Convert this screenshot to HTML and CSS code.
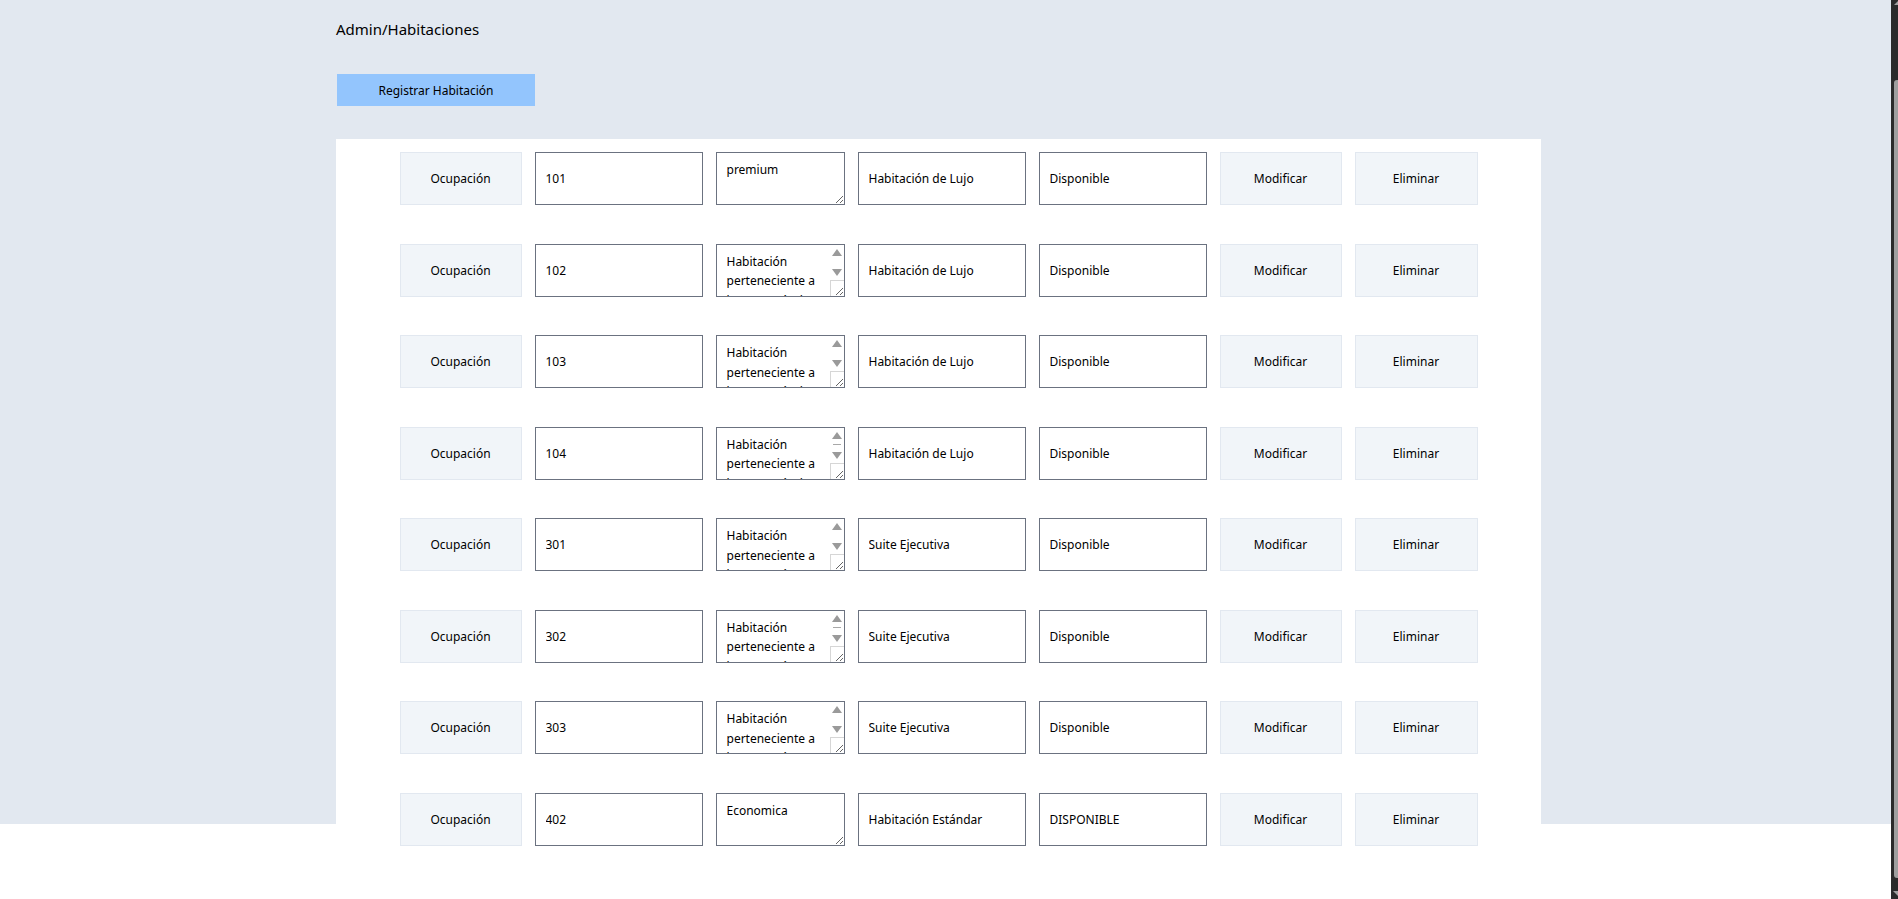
FILE: index.html
```html
<!DOCTYPE html>
<html lang="es">
<head>
<meta charset="utf-8">
<title>Admin/Habitaciones</title>
<link rel="stylesheet" href="styles.css">
</head>
<body>
<div class="page">
  <h1 class="title">Admin/Habitaciones</h1>
  <button class="btn-register" type="button">Registrar Habitación</button>
  <section class="panel">
    <form class="row">
      <button class="cell-btn" type="button">Ocupación</button>
      <input class="field field-num" type="text" value="101">
      <div class="desc-wrap"><textarea class="field field-desc">premium</textarea></div>
      <input class="field field-type" type="text" value="Habitación de Lujo">
      <input class="field field-state" type="text" value="Disponible">
      <button class="cell-btn" type="button">Modificar</button>
      <button class="cell-btn cell-btn-last" type="button">Eliminar</button>
    </form>
    <form class="row">
      <button class="cell-btn" type="button">Ocupación</button>
      <input class="field field-num" type="text" value="102">
      <div class="desc-wrap"><textarea class="field field-desc has-scroll">Habitación perteneciente a la categoría de lujo, con vista al mar y jacuzzi privado.</textarea><span class="sb-up"></span><span class="sb-down"></span><span class="sb-corner"></span></div>
      <input class="field field-type" type="text" value="Habitación de Lujo">
      <input class="field field-state" type="text" value="Disponible">
      <button class="cell-btn" type="button">Modificar</button>
      <button class="cell-btn cell-btn-last" type="button">Eliminar</button>
    </form>
    <form class="row">
      <button class="cell-btn" type="button">Ocupación</button>
      <input class="field field-num" type="text" value="103">
      <div class="desc-wrap"><textarea class="field field-desc has-scroll">Habitación perteneciente a la categoría de lujo, con vista al mar y jacuzzi privado.</textarea><span class="sb-up"></span><span class="sb-down"></span><span class="sb-corner"></span></div>
      <input class="field field-type" type="text" value="Habitación de Lujo">
      <input class="field field-state" type="text" value="Disponible">
      <button class="cell-btn" type="button">Modificar</button>
      <button class="cell-btn cell-btn-last" type="button">Eliminar</button>
    </form>
    <form class="row">
      <button class="cell-btn" type="button">Ocupación</button>
      <input class="field field-num" type="text" value="104">
      <div class="desc-wrap"><textarea class="field field-desc has-scroll">Habitación perteneciente a la categoría de lujo, con vista al mar, jacuzzi privado, minibar, balcón amplio y servicio a la habitación las veinticuatro horas del día.</textarea><span class="sb-up"></span><span class="sb-thumb"></span><span class="sb-down"></span><span class="sb-corner"></span></div>
      <input class="field field-type" type="text" value="Habitación de Lujo">
      <input class="field field-state" type="text" value="Disponible">
      <button class="cell-btn" type="button">Modificar</button>
      <button class="cell-btn cell-btn-last" type="button">Eliminar</button>
    </form>
    <form class="row">
      <button class="cell-btn" type="button">Ocupación</button>
      <input class="field field-num" type="text" value="301">
      <div class="desc-wrap"><textarea class="field field-desc has-scroll">Habitación perteneciente a la categoría ejecutiva, con escritorio amplio y sala de estar.</textarea><span class="sb-up"></span><span class="sb-down"></span><span class="sb-corner"></span></div>
      <input class="field field-type" type="text" value="Suite Ejecutiva">
      <input class="field field-state" type="text" value="Disponible">
      <button class="cell-btn" type="button">Modificar</button>
      <button class="cell-btn cell-btn-last" type="button">Eliminar</button>
    </form>
    <form class="row">
      <button class="cell-btn" type="button">Ocupación</button>
      <input class="field field-num" type="text" value="302">
      <div class="desc-wrap"><textarea class="field field-desc has-scroll">Habitación perteneciente a la categoría ejecutiva, con escritorio amplio, sala de estar, cafetera y acceso al salón ejecutivo durante toda la estancia.</textarea><span class="sb-up"></span><span class="sb-thumb"></span><span class="sb-down"></span><span class="sb-corner"></span></div>
      <input class="field field-type" type="text" value="Suite Ejecutiva">
      <input class="field field-state" type="text" value="Disponible">
      <button class="cell-btn" type="button">Modificar</button>
      <button class="cell-btn cell-btn-last" type="button">Eliminar</button>
    </form>
    <form class="row">
      <button class="cell-btn" type="button">Ocupación</button>
      <input class="field field-num" type="text" value="303">
      <div class="desc-wrap"><textarea class="field field-desc has-scroll">Habitación perteneciente a la categoría ejecutiva, con escritorio amplio y sala de estar.</textarea><span class="sb-up"></span><span class="sb-down"></span><span class="sb-corner"></span></div>
      <input class="field field-type" type="text" value="Suite Ejecutiva">
      <input class="field field-state" type="text" value="Disponible">
      <button class="cell-btn" type="button">Modificar</button>
      <button class="cell-btn cell-btn-last" type="button">Eliminar</button>
    </form>
    <form class="row">
      <button class="cell-btn" type="button">Ocupación</button>
      <input class="field field-num" type="text" value="402">
      <div class="desc-wrap"><textarea class="field field-desc">Economica</textarea></div>
      <input class="field field-type" type="text" value="Habitación Estándar">
      <input class="field field-state" type="text" value="DISPONIBLE">
      <button class="cell-btn" type="button">Modificar</button>
      <button class="cell-btn cell-btn-last" type="button">Eliminar</button>
    </form>
  </section>
</div>
<div class="win-scroll"><div class="win-scroll-up"></div><div class="win-scroll-thumb"></div><div class="win-scroll-down"></div></div>
</body>
</html>
```
FILE: styles.css
```css
html {
  overflow: hidden;
  height: 899px;
}
body {
  margin: 0;
  padding: 0;
  height: 899px;
  overflow: hidden;
  background: #ffffff;
  font-family: "Noto Sans", "Open Sans", sans-serif;
  color: #000000;
}
.page {
  box-sizing: border-box;
  width: 1891px;
  height: 824px;
  background: #e2e8f0;
  padding: 19px 0 0 336px;
}
.title {
  margin: 0;
  font-size: 15px;
  font-weight: 400;
  line-height: 20px;
  letter-spacing: 0;
}
.btn-register {
  display: block;
  margin: 35px 0 0 1px;
  width: 198px;
  height: 32px;
  border: 0;
  padding: 0;
  background: #93c5fd;
  font-family: inherit;
  font-size: 12px;
  color: #000000;
}
.panel {
  margin-top: 33px;
  width: 1205px;
  background: #ffffff;
  padding: 13px 0 60px;
  display: flex;
  flex-direction: column;
  align-items: center;
  gap: 38.57px;
}
.row {
  display: flex;
  gap: 13px;
  height: 53px;
  margin: 0;
}
.cell-btn {
  box-sizing: border-box;
  width: 122px;
  height: 53px;
  background: #f1f5f9;
  border: 1px solid #e2e8f0;
  padding: 0;
  font-family: inherit;
  font-size: 12px;
  color: #000000;
}
.cell-btn-last { width: 123px; }
.field {
  box-sizing: border-box;
  height: 53px;
  margin: 0;
  border: 1px solid #6b7280;
  border-radius: 0;
  background: #ffffff;
  padding: 0 10px;
  font-family: inherit;
  font-size: 12px;
  color: #000000;
  outline: none;
}
.field-num { width: 168px; }
.field-type { width: 168px; }
.field-state { width: 168px; }
.desc-wrap {
  position: relative;
  width: 129px;
  height: 53px;
}
.field-desc {
  display: block;
  width: 129px;
  padding: 7px 10px 0;
  line-height: 19.5px;
  resize: both;
  overflow: hidden;
}
.field-desc.has-scroll {
  padding-right: 27px;
}
.sb-up,
.sb-down {
  position: absolute;
  left: 116px;
  width: 0;
  height: 0;
  border-left: 5px solid transparent;
  border-right: 5px solid transparent;
}
.sb-up {
  top: 5px;
  border-bottom: 7px solid #9a9a9a;
}
.sb-down {
  top: 25px;
  border-top: 7px solid #9a9a9a;
}
.sb-thumb {
  position: absolute;
  left: 117px;
  top: 17px;
  width: 8px;
  height: 1px;
  background: #a8a8a8;
}
.sb-corner {
  position: absolute;
  left: 114px;
  top: 36px;
  width: 14px;
  height: 16px;
  box-sizing: border-box;
  border-left: 1px solid #d6d6d6;
  border-top: 1px solid #d6d6d6;
  pointer-events: none;
}
.win-scroll {
  position: fixed;
  top: 0;
  right: 0;
  width: 7px;
  height: 899px;
  background: #2b2b2b;
}
.win-scroll-up {
  position: absolute;
  top: 1px;
  left: 3px;
  width: 0;
  height: 0;
  border-left: 4px solid transparent;
  border-bottom: 4px solid #a0a0a0;
}
.win-scroll-thumb {
  position: absolute;
  top: 80px;
  left: 3px;
  width: 4px;
  height: 798px;
  background: #9f9f9f;
  border-radius: 3px 0 0 3px;
}
.win-scroll-down {
  position: absolute;
  bottom: 3px;
  left: 2px;
  width: 0;
  height: 0;
  border-left: 5px solid transparent;
  border-top: 5px solid #a0a0a0;
}
```
